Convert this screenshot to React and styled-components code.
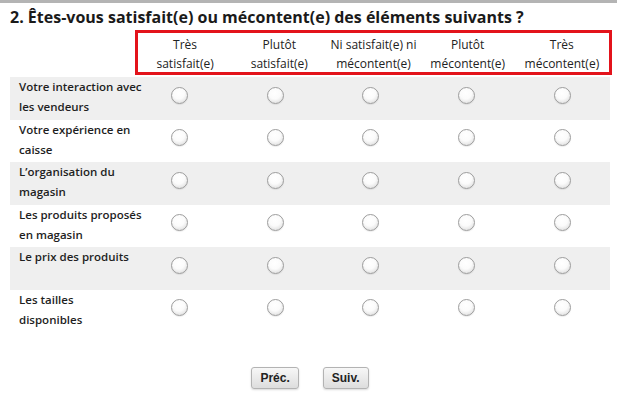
import React from 'react';
import styled, { createGlobalStyle } from 'styled-components';

const GlobalStyle = createGlobalStyle`
    body {
        margin: 0;
        background: #ffffff;
        font-family: "Open Sans", "Liberation Sans", sans-serif;
    }
`;

const Frame = styled.div`
    width: 614px;
    height: 397px;
    border-top: 3px solid #b4b4b4;
    border-right: 1px solid #a8a8a8;
    background: #ffffff;
    padding: 0 0 0 10px;
    box-sizing: content-box;
`;

const Title = styled.h2`
    margin: 0;
    padding-top: 4px;
    font-size: 16px;
    line-height: 20px;
    font-weight: 700;
    color: #1a1a1a;
    white-space: nowrap;
`;

const Grid = styled.div`
    display: grid;
    grid-template-columns: 122px repeat(5, 95.6px);
    width: 600px;
`;

const HeaderRow = styled(Grid)`
    margin-top: 3px;
`;

const HeaderBox = styled.div`
    grid-column: 2 / span 5;
    margin-left: 3px;
    margin-right: -2px;
    height: 37px;
    border: 3px solid #e3131b;
    display: grid;
    grid-template-columns: repeat(5, 1fr);
    padding-top: 2px;
`;

const HeaderCell = styled.div`
    text-align: center;
    font-size: 12px;
    line-height: 19px;
    font-weight: 500;
    color: #222222;
    white-space: nowrap;
`;

const Body = styled.div`
    margin-top: 2px;
`;

const Row = styled(Grid)`
    height: 42.5px;
    background: ${p => (p.$shaded ? '#efefef' : '#ffffff')};
`;

const Label = styled.div`
    padding-left: 9px;
    font-size: 11.5px;
    line-height: 20px;
    font-weight: 600;
    color: #1e1e1e;
    white-space: nowrap;
`;

const Cell = styled.div`
    display: flex;
    align-items: center;
    justify-content: center;
    padding-bottom: 6px;
`;

const Radio = styled.span`
    width: 15px;
    height: 15px;
    border-radius: 50%;
    border: 1px solid #9d9d9d;
    background: radial-gradient(circle at 45% 35%, #ffffff 0%, #fbfbfb 45%, #dedede 85%, #cfcfcf 100%);
    box-shadow: 0 1px 1px rgba(0, 0, 0, 0.08);
`;

const Nav = styled.div`
    display: flex;
    justify-content: center;
    gap: 24px;
    margin-top: 35px;
    width: 600px;
`;

const NavButton = styled.button`
    height: 22px;
    padding: 0 8px;
    font-family: "Liberation Sans", Arial, sans-serif;
    font-size: 12px;
    font-weight: 700;
    color: #222222;
    border: 1px solid #b3b3b3;
    border-radius: 3px;
    background: linear-gradient(#f7f7f7, #dddddd);
    box-shadow: 0 1px 2px rgba(0, 0, 0, 0.15);
`;

const columns = [
    ['Très', 'satisfait(e)'],
    ['Plutôt', 'satisfait(e)'],
    ['Ni satisfait(e) ni', 'mécontent(e)'],
    ['Plutôt', 'mécontent(e)'],
    ['Très', 'mécontent(e)'],
];

const items = [
    ['Votre interaction avec', 'les vendeurs'],
    ['Votre expérience en', 'caisse'],
    ['L’organisation du', 'magasin'],
    ['Les produits proposés', 'en magasin'],
    ['Le prix des produits'],
    ['Les tailles', 'disponibles'],
];

function App() {
    return (
        <>
            <GlobalStyle />
            <Frame>
                <Title>2. Êtes-vous satisfait(e) ou mécontent(e) des éléments suivants ?</Title>
                <HeaderRow>
                    <HeaderBox>
                        {columns.map((c, i) => (
                            <HeaderCell key={i}>
                                {c[0]}
                                <br />
                                {c[1]}
                            </HeaderCell>
                        ))}
                    </HeaderBox>
                </HeaderRow>
                <Body>
                    {items.map((lines, i) => (
                        <Row key={i} $shaded={i % 2 === 0}>
                            <Label>
                                {lines.map((l, j) => (
                                    <div key={j}>{l}</div>
                                ))}
                            </Label>
                            {columns.map((_, k) => (
                                <Cell key={k}>
                                    <Radio />
                                </Cell>
                            ))}
                        </Row>
                    ))}
                </Body>
                <Nav>
                    <NavButton>Préc.</NavButton>
                    <NavButton>Suiv.</NavButton>
                </Nav>
            </Frame>
        </>
    );
}

export default App;
